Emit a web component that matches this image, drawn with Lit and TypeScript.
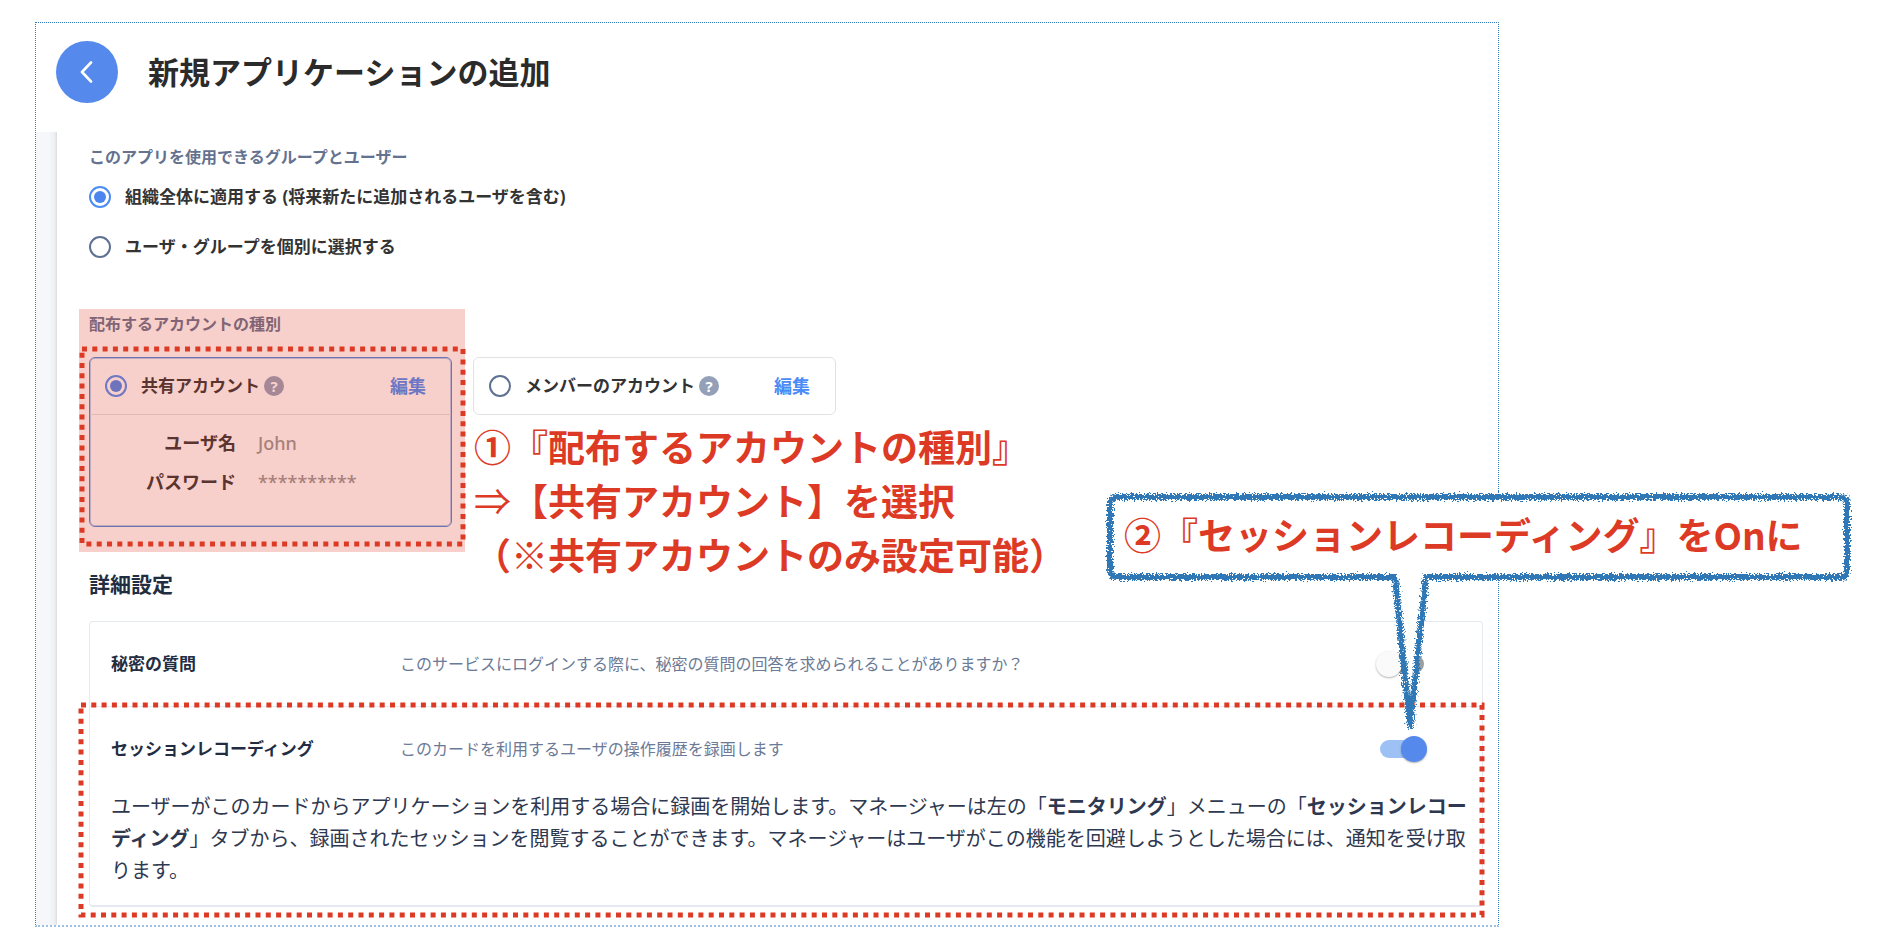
import { LitElement, html, css, svg } from "lit";
import { customElement, property } from "lit/decorators.js";

/** Rectangle outlined with square red dots, filling its positioned host. */
@customElement("dotted-outline")
class DottedOutline extends LitElement {
  static styles = css`
    :host {
      display: block;
      position: absolute;
      pointer-events: none;
    }
    .lines {
      display: block;
      width: 100%;
      height: 100%;
      overflow: visible;
    }
    .dots {
      fill: none;
      stroke: #dd3a26;
      stroke-width: 5;
      stroke-dasharray: 5 5.3;
    }
  `;

  render() {
    return html`<svg class="lines" aria-hidden="true">
      <rect class="dots" width="100%" height="100%"></rect>
    </svg>`;
  }
}

/** Speech balloon with a chalk-like outline and a tail below it. */
@customElement("callout-note")
class CalloutNote extends LitElement {
  static styles = css`
    :host {
      display: block;
      position: absolute;
      width: 745px;
      height: 88px;
    }
    .balloon {
      position: absolute;
      left: 0;
      top: 0;
      overflow: visible;
    }
    .fill {
      fill: #fff;
    }
    .line {
      fill: none;
      stroke: #2f77b5;
      stroke-width: 6;
      stroke-linejoin: round;
    }
    .text {
      position: relative;
      padding: 14px 0 20px 18px;
      white-space: nowrap;
    }
  `;

  render() {
    const d =
      "M10 4 H735 Q741 4 741 11 V77 Q741 84 735 84 H320 L304 233 L289 84 H10 Q4 84 4 77 V11 Q4 4 10 4 Z";
    return html`
      <svg class="balloon" width="745" height="240" viewBox="0 0 745 240" aria-hidden="true">
        <defs>
          <filter id="chalk" x="-10" y="-10" width="765" height="260" filterUnits="userSpaceOnUse"
            color-interpolation-filters="sRGB">
            <feTurbulence type="fractalNoise" baseFrequency="0.6" numOctaves="2" seed="4" result="n"></feTurbulence>
            <feDisplacementMap in="SourceGraphic" in2="n" scale="9" xChannelSelector="R" yChannelSelector="G"></feDisplacementMap>
          </filter>
        </defs>
        ${svg`<path class="fill" d=${d}></path><path class="line" filter="url(#chalk)" d=${d}></path>`}
      </svg>
      <div class="text"><slot></slot></div>
    `;
  }
}

/** One row of the advanced settings: name, description and a switch. */
@customElement("setting-row")
class SettingRow extends LitElement {
  @property() name = "";
  @property() description = "";
  @property({ type: Boolean }) on = false;

  static styles = css`
    :host {
      display: block;
    }
    .row {
      display: grid;
      grid-template-columns: 289px 1fr 52px;
      align-items: center;
      height: 84px;
      padding: 0 54px 0 21px;
      box-sizing: border-box;
    }
    .name {
      font-size: 17px;
      font-weight: 700;
      color: #232d42;
    }
    .description {
      font-size: 16px;
      color: #6b7a96;
    }
    .switch {
      appearance: none;
      display: flex;
      align-items: center;
      position: relative;
      width: 44px;
      height: 18px;
      margin: 0 0 0 4px;
      border-radius: 9px;
      background: #9e9e9e;
    }
    .switch::before {
      content: "";
      width: 26px;
      height: 26px;
      flex: none;
      margin-left: -4px;
      border-radius: 50%;
      background: #fafafa;
      box-shadow: 0 1px 2px rgba(0, 0, 0, 0.3);
    }
    .switch:checked {
      background: #9dc1f4;
    }
    .switch:checked::before {
      margin-left: 21px;
      background: #5589ec;
    }
  `;

  render() {
    return html`<div class="row">
      <label class="name" for="switch">${this.name}</label>
      <span class="description" id="description">${this.description}</span>
      <input class="switch" id="switch" type="checkbox" role="switch"
        aria-describedby="description" .checked=${this.on} />
    </div>`;
  }
}

@customElement("app-root")
class AppRoot extends LitElement {
  static styles = css`
    :host {
      display: block;
      background: #fff;
      color: #333;
      font-family: "Noto Sans", "Noto Sans CJK JP", sans-serif;
      font-size: 17px;
      line-height: 24px;
    }
    h1, h2, p, dl, dd {
      margin: 0;
    }
    .frame {
      position: relative;
      margin: 22px 383px 0 35px;
      border: 1px dotted #2f7cc0;
      border-bottom: 2px dotted #9cc1e3;
    }
    .header {
      display: flex;
      align-items: center;
      gap: 30px;
      padding: 18px 20px 29px;
    }
    .back {
      display: grid;
      place-items: center;
      width: 62px;
      height: 62px;
      padding: 0;
      border: 0;
      border-radius: 50%;
      background: #5589ec;
    }
    .title {
      font-size: 31px;
      line-height: 40px;
      font-weight: 700;
      color: #2b2b2b;
    }
    .body {
      display: grid;
      grid-template-columns: 21px minmax(0, 1fr);
    }
    .rail {
      background: linear-gradient(90deg, #f5f7fb 0 60%, #eceef2 90%, #d9dbde);
    }
    .content {
      padding: 13px 15px 18px 32px;
    }
    .caption {
      font-size: 16px;
      line-height: 24px;
      font-weight: 700;
      color: #64728f;
    }
    .options {
      display: grid;
      gap: 28px;
      margin-top: 17px;
    }
    .option {
      display: flex;
      align-items: center;
      height: 22px;
      font-weight: 700;
    }
    .radio {
      appearance: none;
      flex: none;
      display: grid;
      place-items: center;
      box-sizing: border-box;
      width: 22px;
      height: 22px;
      margin: 0 14px 0 0;
      border: 2px solid #5f7192;
      border-radius: 50%;
      background: #fff;
    }
    .radio:checked {
      border-color: #4c8cf5;
    }
    .radio:checked::before {
      content: "";
      width: 12px;
      height: 12px;
      border-radius: 50%;
      background: #4c85ee;
    }
    .accounts {
      position: relative;
      margin-top: 54px;
    }
    .cards {
      display: grid;
      grid-template-columns: 363px 363px;
      align-items: start;
      gap: 21px;
      margin-top: 21px;
    }
    .card {
      box-sizing: border-box;
      border: 1px solid #e0e2e5;
      border-radius: 6px;
    }
    .card.selected {
      height: 170px;
      border-color: #4c85e0;
      box-shadow: inset 0 0 0 1px rgba(76, 133, 224, 0.4);
    }
    .card-head {
      display: flex;
      align-items: center;
      height: 56px;
      padding: 0 25px 0 15px;
    }
    .selected .card-head {
      border-bottom: 1px solid #e0e2e5;
    }
    .help {
      display: grid;
      place-items: center;
      width: 20px;
      height: 20px;
      margin: 0 auto 0 4px;
      padding: 0;
      border: 0;
      border-radius: 50%;
      background: #94a0b8;
      color: #fff;
      font: 700 15px/20px "Noto Sans", sans-serif;
    }
    .edit {
      font-size: 18px;
      font-weight: 700;
      color: #4c8af5;
      text-decoration: none;
    }
    .credentials {
      display: grid;
      grid-template-columns: 130px 1fr;
      column-gap: 22px;
      row-gap: 15px;
      padding: 16px;
      font-size: 18px;
    }
    .credentials dt {
      text-align: right;
      font-weight: 700;
    }
    .credentials dd {
      color: #959595;
      font-weight: 500;
    }
    .highlight {
      position: absolute;
      left: -10px;
      top: -3px;
      width: 386px;
      height: 243px;
      background: rgba(221, 58, 38, 0.24);
      pointer-events: none;
    }
    .outline-account {
      left: -7px;
      top: 37px;
      width: 381px;
      height: 195px;
    }
    .note {
      color: #dd3a26;
      font-family: "Noto Sans CJK JP", sans-serif;
      font-size: 37px;
      font-weight: 700;
      line-height: 54px;
      white-space: nowrap;
    }
    .arrow {
      font-weight: 400;
    }
    .note-account {
      position: absolute;
      left: 385px;
      top: 107px;
    }
    .note-session {
      right: -353px;
      top: 470px;
    }
    .section-title {
      margin: 42px 0 22px;
      font-size: 21px;
      line-height: 30px;
      font-weight: 700;
      color: #232d42;
    }
    .settings {
      border: 1px solid #e4e9f2;
      border-bottom-width: 2px;
      border-radius: 4px;
    }
    .session {
      position: relative;
      border-top: 1px solid #e4e9f2;
    }
    .session-text {
      padding: 0 8px 18px 21px;
      font-size: 20px;
      line-height: 32px;
      color: #2e3850;
    }
    .outline-session {
      left: -9px;
      right: 0;
      top: -2px;
      bottom: -10px;
    }
  `;

  render() {
    return html`
      <main class="frame">
        <header class="header">
          <button class="back" aria-label="戻る">
            <svg width="14" height="22" viewBox="0 0 14 22" fill="none" stroke="#fff"
              stroke-width="2.6" stroke-linecap="round" stroke-linejoin="round" aria-hidden="true">
              <path d="M11 1.5 L2 11 L11 20.5"></path>
            </svg>
          </button>
          <h1 class="title">新規アプリケーションの追加</h1>
        </header>
        <div class="body">
          <div class="rail"></div>
          <div class="content">
            <section role="radiogroup" aria-labelledby="scope-caption">
              <div class="caption" id="scope-caption">このアプリを使用できるグループとユーザー</div>
              <div class="options">
                <label class="option">
                  <input class="radio" type="radio" name="scope" checked />組織全体に適用する (将来新たに追加されるユーザを含む)
                </label>
                <label class="option">
                  <input class="radio" type="radio" name="scope" />ユーザ・グループを個別に選択する
                </label>
              </div>
            </section>

            <section class="accounts" role="radiogroup" aria-labelledby="account-caption">
              <div class="caption" id="account-caption">配布するアカウントの種別</div>
              <div class="cards">
                <div class="card selected">
                  <div class="card-head">
                    <label class="option"><input class="radio" type="radio" name="account" checked />共有アカウント</label>
                    <button class="help" aria-label="ヘルプ">?</button>
                    <a class="edit" href="#">編集</a>
                  </div>
                  <dl class="credentials">
                    <dt>ユーザ名</dt>
                    <dd>John</dd>
                    <dt>パスワード</dt>
                    <dd>**********</dd>
                  </dl>
                </div>
                <div class="card">
                  <div class="card-head">
                    <label class="option"><input class="radio" type="radio" name="account" />メンバーのアカウント</label>
                    <button class="help" aria-label="ヘルプ">?</button>
                    <a class="edit" href="#">編集</a>
                  </div>
                </div>
              </div>
              <div class="highlight"></div>
              <dotted-outline class="outline-account"></dotted-outline>
              <div class="note note-account">
                ①『配布するアカウントの種別』<br /><span class="arrow">⇒</span>【共有アカウント】を選択<br />（※共有アカウントのみ設定可能）
              </div>
            </section>

            <h2 class="section-title">詳細設定</h2>
            <section class="settings">
              <setting-row name="秘密の質問"
                description="このサービスにログインする際に、秘密の質問の回答を求められることがありますか？"></setting-row>
              <div class="session">
                <setting-row name="セッションレコーディング"
                  description="このカードを利用するユーザの操作履歴を録画します" on></setting-row>
                <p class="session-text">ユーザーがこのカードからアプリケーションを利用する場合に録画を開始します。マネージャーは左の「<b>モニタリング</b>」メニューの「<b>セッションレコーディング</b>」タブから、録画されたセッションを閲覧することができます。マネージャーはユーザがこの機能を回避しようとした場合には、通知を受け取ります。</p>
                <dotted-outline class="outline-session"></dotted-outline>
              </div>
            </section>
          </div>
        </div>
        <callout-note class="note note-session">②『セッションレコーディング』をOnに</callout-note>
      </main>
    `;
  }
}
